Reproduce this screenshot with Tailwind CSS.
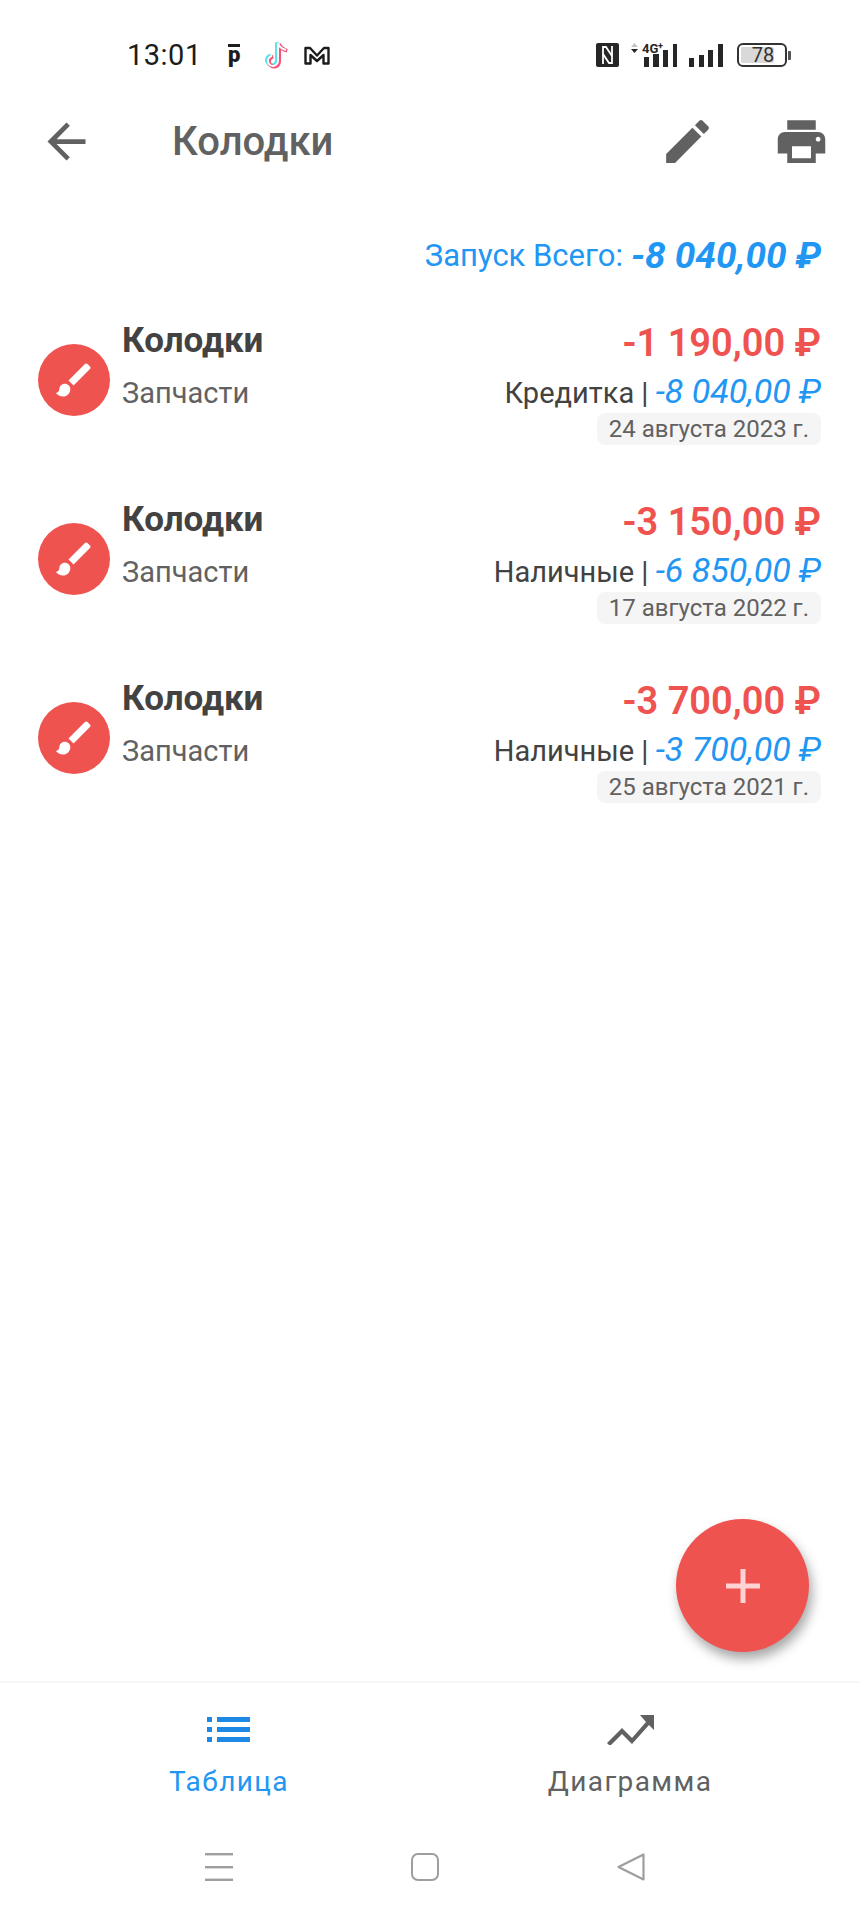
<!DOCTYPE html>
<html lang="ru">
<head>
  <meta charset="UTF-8" />
  <meta name="viewport" content="width=device-width, initial-scale=1.0"/>
  <title>Колодки</title>
  <script src="https://cdn.jsdelivr.net/npm/@tailwindcss/browser@4"></script>
</head>
<body class="bg-white font-['Roboto',sans-serif]">
<div class="relative w-[860px] h-[1920px] flex flex-col overflow-hidden bg-white">

  <!-- status bar -->
  <div class="h-[110px] shrink-0 flex items-center pl-[127px]">
    <div class="w-[101px] text-[29px] leading-none tracking-[0.5px] text-[#1c1c1c]">13:01</div>
    <div class="w-[35px] h-[22px] flex flex-col">
      <div class="w-[12px] h-[3px] bg-[#1c1c1c]"></div>
      <div class="w-[12px] text-[22px] leading-[17px] font-black text-[#1c1c1c] -mt-[1px]">p</div>
    </div>
    <div class="w-[41px]">
      <svg width="26" height="30" viewBox="0 0 26 30" fill="none" stroke-width="3.6">
        <path d="M15 3v18a5 5 0 1 1-6-5M15 3c1 4 4 6 8 7" stroke="#5fe3e8" transform="translate(-1.2 -0.8)"/>
        <path d="M15 3v18a5 5 0 1 1-6-5M15 3c1 4 4 6 8 7" stroke="#f5527a" transform="translate(1.2 0.8)"/>
        <path d="M15 3v18a5 5 0 1 1-6-5M15 3c1 4 4 6 8 7" stroke="#ffffff" stroke-width="2"/>
      </svg>
    </div>
    <svg class="w-[26px] h-[19px]" viewBox="0 0 26 19" fill="none" stroke="#1c1c1c" stroke-width="2.4">
      <path d="M1.5 17.5V2h4.5L13 9.5 20 2h4.5v15.5h-5V9L13 15 6.5 9v8.5z" stroke-linejoin="round"/>
    </svg>
    <div class="w-[266px]"></div>
    <svg class="w-[23px] h-[24px]" viewBox="0 0 23 24" fill="none">
      <rect width="23" height="24" rx="2" fill="#262626"/>
      <path d="M7 21V4h3l6 9" stroke="#fff" stroke-width="1.8"/>
      <path d="M16 3v17h-3L7 11" stroke="#fff" stroke-width="1.8"/>
    </svg>
    <svg class="ml-[12px] w-[93px] h-[26px] overflow-visible" viewBox="0 0 93 26">
      <path d="M0 5l3.5-4L7 5z" fill="#c4c4c4"/>
      <path d="M0 7h7l-3.5 4z" fill="#262626"/>
      <text x="11" y="11" font-family="Roboto" font-size="13" font-weight="700" fill="#262626">4G</text>
      <text x="27" y="7" font-family="Roboto" font-size="9" font-weight="700" fill="#262626">+</text>
      <rect x="13" y="15" width="5" height="10" fill="#262626"/>
      <rect x="22" y="12" width="6" height="13" fill="#262626"/>
      <rect x="32" y="8" width="5" height="17" fill="#262626"/>
      <rect x="42" y="2" width="4" height="23" fill="#262626"/>
      <rect x="58" y="16" width="5" height="9" fill="#262626"/>
      <rect x="68" y="13" width="5" height="12" fill="#262626"/>
      <rect x="77" y="8" width="5" height="17" fill="#262626"/>
      <rect x="87" y="2" width="5" height="23" fill="#262626"/>
    </svg>
    <div class="ml-[13px] w-[50px] h-[24px] rounded-[6px] border-2 border-[#333] p-[2px] relative flex">
      <div class="w-[33px] h-full bg-[#d9d9d9] rounded-[2px]"></div>
      <div class="absolute inset-0 flex items-center justify-center text-[20px] leading-none text-[#333] pl-[2px]">78</div>
    </div>
    <div class="ml-[1px] w-[3px] h-[9px] bg-[#555] rounded-r-[1px]"></div>
  </div>

  <!-- toolbar -->
  <div class="h-[62px] shrink-0 flex items-center pl-[38px] text-[#616161]">
    <svg class="w-[57px] h-[57px]" viewBox="0 0 24 24" fill="currentColor"><path d="M20 11H7.83l5.59-5.59L12 4l-8 8 8 8 1.41-1.41L7.83 13H20v-2z"/></svg>
    <div class="ml-[77px] w-[487px] text-[40px] leading-none font-medium pt-[2px]">Колодки</div>
    <svg class="w-[57px] h-[57px]" viewBox="0 0 24 24" fill="currentColor"><path d="M3 17.25V21h3.75L17.81 9.94l-3.75-3.75L3 17.25zM20.71 7.04c.39-.39.39-1.02 0-1.41l-2.34-2.34c-.39-.39-1.02-.39-1.41 0l-1.83 1.83 3.75 3.75 1.83-1.83z"/></svg>
    <svg class="ml-[57px] w-[57px] h-[57px]" viewBox="0 0 24 24" fill="currentColor"><path d="M19 8H5c-1.66 0-3 1.34-3 3v6h4v4h12v-4h4v-6c0-1.66-1.34-3-3-3zm-3 11H8v-5h8v5zm3-7c-.55 0-1-.45-1-1s.45-1 1-1 1 .45 1 1-.45 1-1 1zm-1-9H6v4h12V3z"/></svg>
  </div>

  <!-- total -->
  <div class="mt-[62px] h-[44px] shrink-0 pr-[39px] flex items-center justify-end text-[#2196f3]">
    <span class="text-[31px]">Запуск Всего:</span>
    <span class="ml-[8px] text-[37px] font-bold italic">-8 040,00 ₽</span>
  </div>

  <!-- rows -->
  <div class="mt-[41px] flex-1 pl-[38px] pr-[39px]">
    <div class="h-[179px] flex justify-between">
      <div class="flex">
        <div class="mt-[25px] w-[72px] h-[72px] rounded-full bg-[#ef5350] flex items-center justify-center">
          <svg class="w-[44px] h-[44px]" viewBox="0 0 24 24" fill="#fff"><path d="M7 14c-1.66 0-3 1.34-3 3 0 1.31-1.16 2-2 2 .92 1.22 2.49 2 4 2 2.21 0 4-1.79 4-4 0-1.66-1.34-3-3-3zm13.71-9.37l-1.34-1.34c-.39-.39-1.02-.39-1.41 0L9 12.25 11.75 15l8.96-8.96c.39-.39.39-1.02 0-1.41z"/></svg>
        </div>
        <div class="ml-[12px]">
          <div class="h-[44px] text-[35px] leading-[44px] font-bold text-[#424242]">Колодки</div>
          <div class="mt-[8px] h-[44px] text-[29px] leading-[44px] text-[#616161]">Запчасти</div>
        </div>
      </div>
      <div class="flex flex-col items-end">
        <div class="h-[44px] mt-[2px] text-[38px] leading-[44px] font-semibold text-[#ef5350]">-1 190,00 ₽</div>
        <div class="mt-[6px] h-[40px] text-[29px] leading-[40px] text-[#424242]">Кредитка | <span class="italic text-[34px] text-[#2196f3]">-8 040,00 ₽</span></div>
        <div class="mt-[2px] h-[32px] px-[12px] rounded-[8px] bg-[#f5f5f5] text-[24px] leading-[33px] text-[#616161]">24 августа 2023 г.</div>
      </div>
    </div>

    <div class="h-[179px] flex justify-between">
      <div class="flex">
        <div class="mt-[25px] w-[72px] h-[72px] rounded-full bg-[#ef5350] flex items-center justify-center">
          <svg class="w-[44px] h-[44px]" viewBox="0 0 24 24" fill="#fff"><path d="M7 14c-1.66 0-3 1.34-3 3 0 1.31-1.16 2-2 2 .92 1.22 2.49 2 4 2 2.21 0 4-1.79 4-4 0-1.66-1.34-3-3-3zm13.71-9.37l-1.34-1.34c-.39-.39-1.02-.39-1.41 0L9 12.25 11.75 15l8.96-8.96c.39-.39.39-1.02 0-1.41z"/></svg>
        </div>
        <div class="ml-[12px]">
          <div class="h-[44px] text-[35px] leading-[44px] font-bold text-[#424242]">Колодки</div>
          <div class="mt-[8px] h-[44px] text-[29px] leading-[44px] text-[#616161]">Запчасти</div>
        </div>
      </div>
      <div class="flex flex-col items-end">
        <div class="h-[44px] mt-[2px] text-[38px] leading-[44px] font-semibold text-[#ef5350]">-3 150,00 ₽</div>
        <div class="mt-[6px] h-[40px] text-[29px] leading-[40px] text-[#424242]">Наличные | <span class="italic text-[34px] text-[#2196f3]">-6 850,00 ₽</span></div>
        <div class="mt-[2px] h-[32px] px-[12px] rounded-[8px] bg-[#f5f5f5] text-[24px] leading-[33px] text-[#616161]">17 августа 2022 г.</div>
      </div>
    </div>

    <div class="h-[179px] flex justify-between">
      <div class="flex">
        <div class="mt-[25px] w-[72px] h-[72px] rounded-full bg-[#ef5350] flex items-center justify-center">
          <svg class="w-[44px] h-[44px]" viewBox="0 0 24 24" fill="#fff"><path d="M7 14c-1.66 0-3 1.34-3 3 0 1.31-1.16 2-2 2 .92 1.22 2.49 2 4 2 2.21 0 4-1.79 4-4 0-1.66-1.34-3-3-3zm13.71-9.37l-1.34-1.34c-.39-.39-1.02-.39-1.41 0L9 12.25 11.75 15l8.96-8.96c.39-.39.39-1.02 0-1.41z"/></svg>
        </div>
        <div class="ml-[12px]">
          <div class="h-[44px] text-[35px] leading-[44px] font-bold text-[#424242]">Колодки</div>
          <div class="mt-[8px] h-[44px] text-[29px] leading-[44px] text-[#616161]">Запчасти</div>
        </div>
      </div>
      <div class="flex flex-col items-end">
        <div class="h-[44px] mt-[2px] text-[38px] leading-[44px] font-semibold text-[#ef5350]">-3 700,00 ₽</div>
        <div class="mt-[6px] h-[40px] text-[29px] leading-[40px] text-[#424242]">Наличные | <span class="italic text-[34px] text-[#2196f3]">-3 700,00 ₽</span></div>
        <div class="mt-[2px] h-[32px] px-[12px] rounded-[8px] bg-[#f5f5f5] text-[24px] leading-[33px] text-[#616161]">25 августа 2021 г.</div>
      </div>
    </div>
  </div>

  <!-- fab -->
  <div class="absolute left-[676px] top-[1519px] w-[133px] h-[133px] rounded-full bg-[#ef5350] shadow-[3px_7px_12px_rgba(0,0,0,0.35)] flex items-center justify-center">
    <svg class="w-[34px] h-[34px]" viewBox="0 0 34 34" fill="#ffd3d3"><path d="M14.5 0h5v14.5H34v5H19.500V34h-5V19.500H0v-5h14.500z"/></svg>
  </div>

  <!-- tabs -->
  <div class="h-[149px] shrink-0 border-t-2 border-[#f7f7f7] flex pt-[30px]">
    <div class="w-[458px] flex flex-col items-center text-[#1e88e5]">
      <svg class="w-[44px] h-[32px]" viewBox="0 0 44 32" fill="currentColor">
        <rect x="0" y="4" width="5" height="5"/><rect x="10" y="4" width="33" height="5"/>
        <rect x="0" y="14" width="5" height="5"/><rect x="10" y="14" width="33" height="5"/>
        <rect x="0" y="24" width="5" height="5"/><rect x="10" y="24" width="33" height="5"/>
      </svg>
      <div class="mt-[17px] h-[40px] text-[28px] leading-[40px] tracking-[1.4px] text-[#2196f3]">Таблица</div>
    </div>
    <div class="w-[344px] flex flex-col items-center text-[#616161]">
      <svg class="w-[48px] h-[32px]" viewBox="0 0 48 32" fill="currentColor">
        <path d="M1 30l15-15 10 10L40 9l-6-7h14v15l-5-5-17 19-10-10L4 33z"/>
      </svg>
      <div class="mt-[17px] h-[40px] text-[28px] leading-[40px] tracking-[1.4px]">Диаграмма</div>
    </div>
  </div>

  <!-- nav bar -->
  <div class="h-[90px] shrink-0 flex pl-[205px] pt-[23px] gap-[178px]">
    <svg class="w-[28px] h-[28px]" viewBox="0 0 28 28" fill="#9e9e9e"><rect y="0" width="29" height="2.4"/><rect y="13" width="29" height="2.4"/><rect y="25.6" width="29" height="2.4"/></svg>
    <div class="w-[28px] h-[28px] rounded-[7px] border-2 border-[#9e9e9e]"></div>
    <svg class="w-[28px] h-[28px]" viewBox="0 0 28 28" fill="none" stroke="#9e9e9e" stroke-width="2.2" stroke-linejoin="round"><path d="M26.5 1.5v25L1.5 14z"/></svg>
  </div>

</div>
</body>
</html>
